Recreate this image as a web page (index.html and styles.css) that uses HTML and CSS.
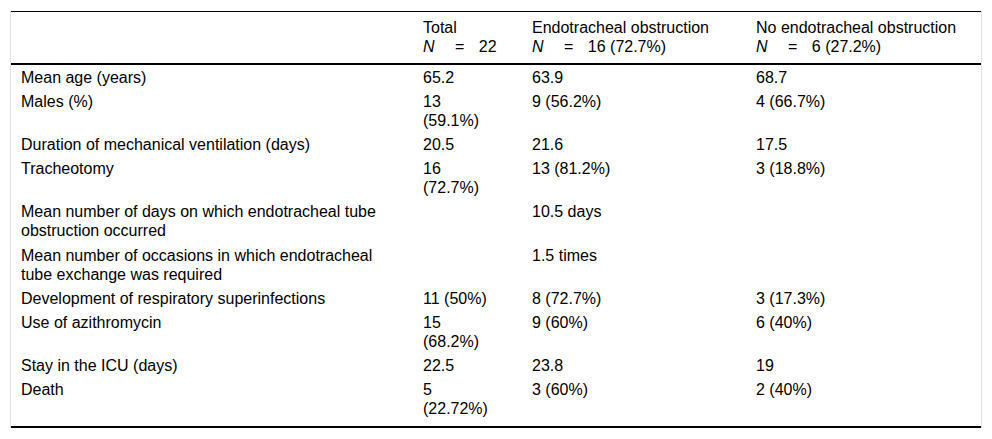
FILE: index.html
```html
<!DOCTYPE html>
<html lang="en">
<head>
<meta charset="utf-8">
<title>Table</title>
<link rel="stylesheet" href="styles.css">
</head>
<body>
<div class="frame">
  <table class="data">
    <colgroup>
      <col class="c1">
      <col class="c2">
      <col class="c3">
      <col class="c4">
    </colgroup>
    <thead>
      <tr>
        <th></th>
        <th class="tot">Total<br><span class="n"><i>N</i> <span class="eq">=</span> 22</span></th>
        <th>Endotracheal obstruction<br><span class="n"><i>N</i> <span class="eq">=</span> 16 (72.7%)</span></th>
        <th>No endotracheal obstruction<br><span class="n"><i>N</i> <span class="eq">=</span> 6 (27.2%)</span></th>
      </tr>
    </thead>
    <tbody>
      <tr><td>Mean age (years)</td><td class="tot">65.2</td><td>63.9</td><td>68.7</td></tr>
      <tr><td>Males (%)</td><td class="tot">13 (59.1%)</td><td>9 (56.2%)</td><td>4 (66.7%)</td></tr>
      <tr><td>Duration of mechanical ventilation (days)</td><td class="tot">20.5</td><td>21.6</td><td>17.5</td></tr>
      <tr><td>Tracheotomy</td><td class="tot">16 (72.7%)</td><td>13 (81.2%)</td><td>3 (18.8%)</td></tr>
      <tr><td>Mean number of days on which endotracheal tube obstruction occurred</td><td class="tot"></td><td>10.5 days</td><td></td></tr>
      <tr><td>Mean number of occasions in which endotracheal tube exchange was required</td><td class="tot"></td><td>1.5 times</td><td></td></tr>
      <tr><td>Development of respiratory superinfections</td><td class="tot">11 (50%)</td><td>8 (72.7%)</td><td>3 (17.3%)</td></tr>
      <tr><td>Use of azithromycin</td><td class="tot">15 (68.2%)</td><td>9 (60%)</td><td>6 (40%)</td></tr>
      <tr><td>Stay in the ICU (days)</td><td class="tot">22.5</td><td>23.8</td><td>19</td></tr>
      <tr class="last"><td>Death</td><td class="tot">5 (22.72%)</td><td>3 (60%)</td><td>2 (40%)</td></tr>
    </tbody>
  </table>
</div>
</body>
</html>
```

FILE: styles.css
```css
html, body {
  margin: 0;
  padding: 0;
  background: #fff;
}

body {
  padding: 11px 10px 0 10px;
  font-family: "Liberation Sans", Arial, sans-serif;
  font-size: 16px;
  color: #000;
}

.frame {
  border-left: 1px solid #e3e3e3;
  border-right: 1px solid #e3e3e3;
}

.data {
  width: 970px;
  border-collapse: collapse;
  table-layout: fixed;
  border-top: 1px solid #000;
  border-bottom: 2px solid #000;
}

.c1 { width: 402px; }
.c2 { width: 109px; }
.c3 { width: 224px; }
.c4 { width: 235px; }

.data th {
  font-weight: normal;
  text-align: left;
  vertical-align: top;
  line-height: 19px;
  padding: 6px 10px 7px 10px;
  border-bottom: 2px solid #000;
}

.data td {
  text-align: left;
  vertical-align: top;
  line-height: 19px;
  padding: 2.6px 10px 2.6px 10px;
}

.data .tot {
  padding-right: 30px;
}

.data .last td {
  padding-bottom: 7.6px;
}

.n {
  white-space: nowrap;
}

.n i {
  font-style: italic;
}

.eq {
  margin: 0 10px 0 16px;
}
```
